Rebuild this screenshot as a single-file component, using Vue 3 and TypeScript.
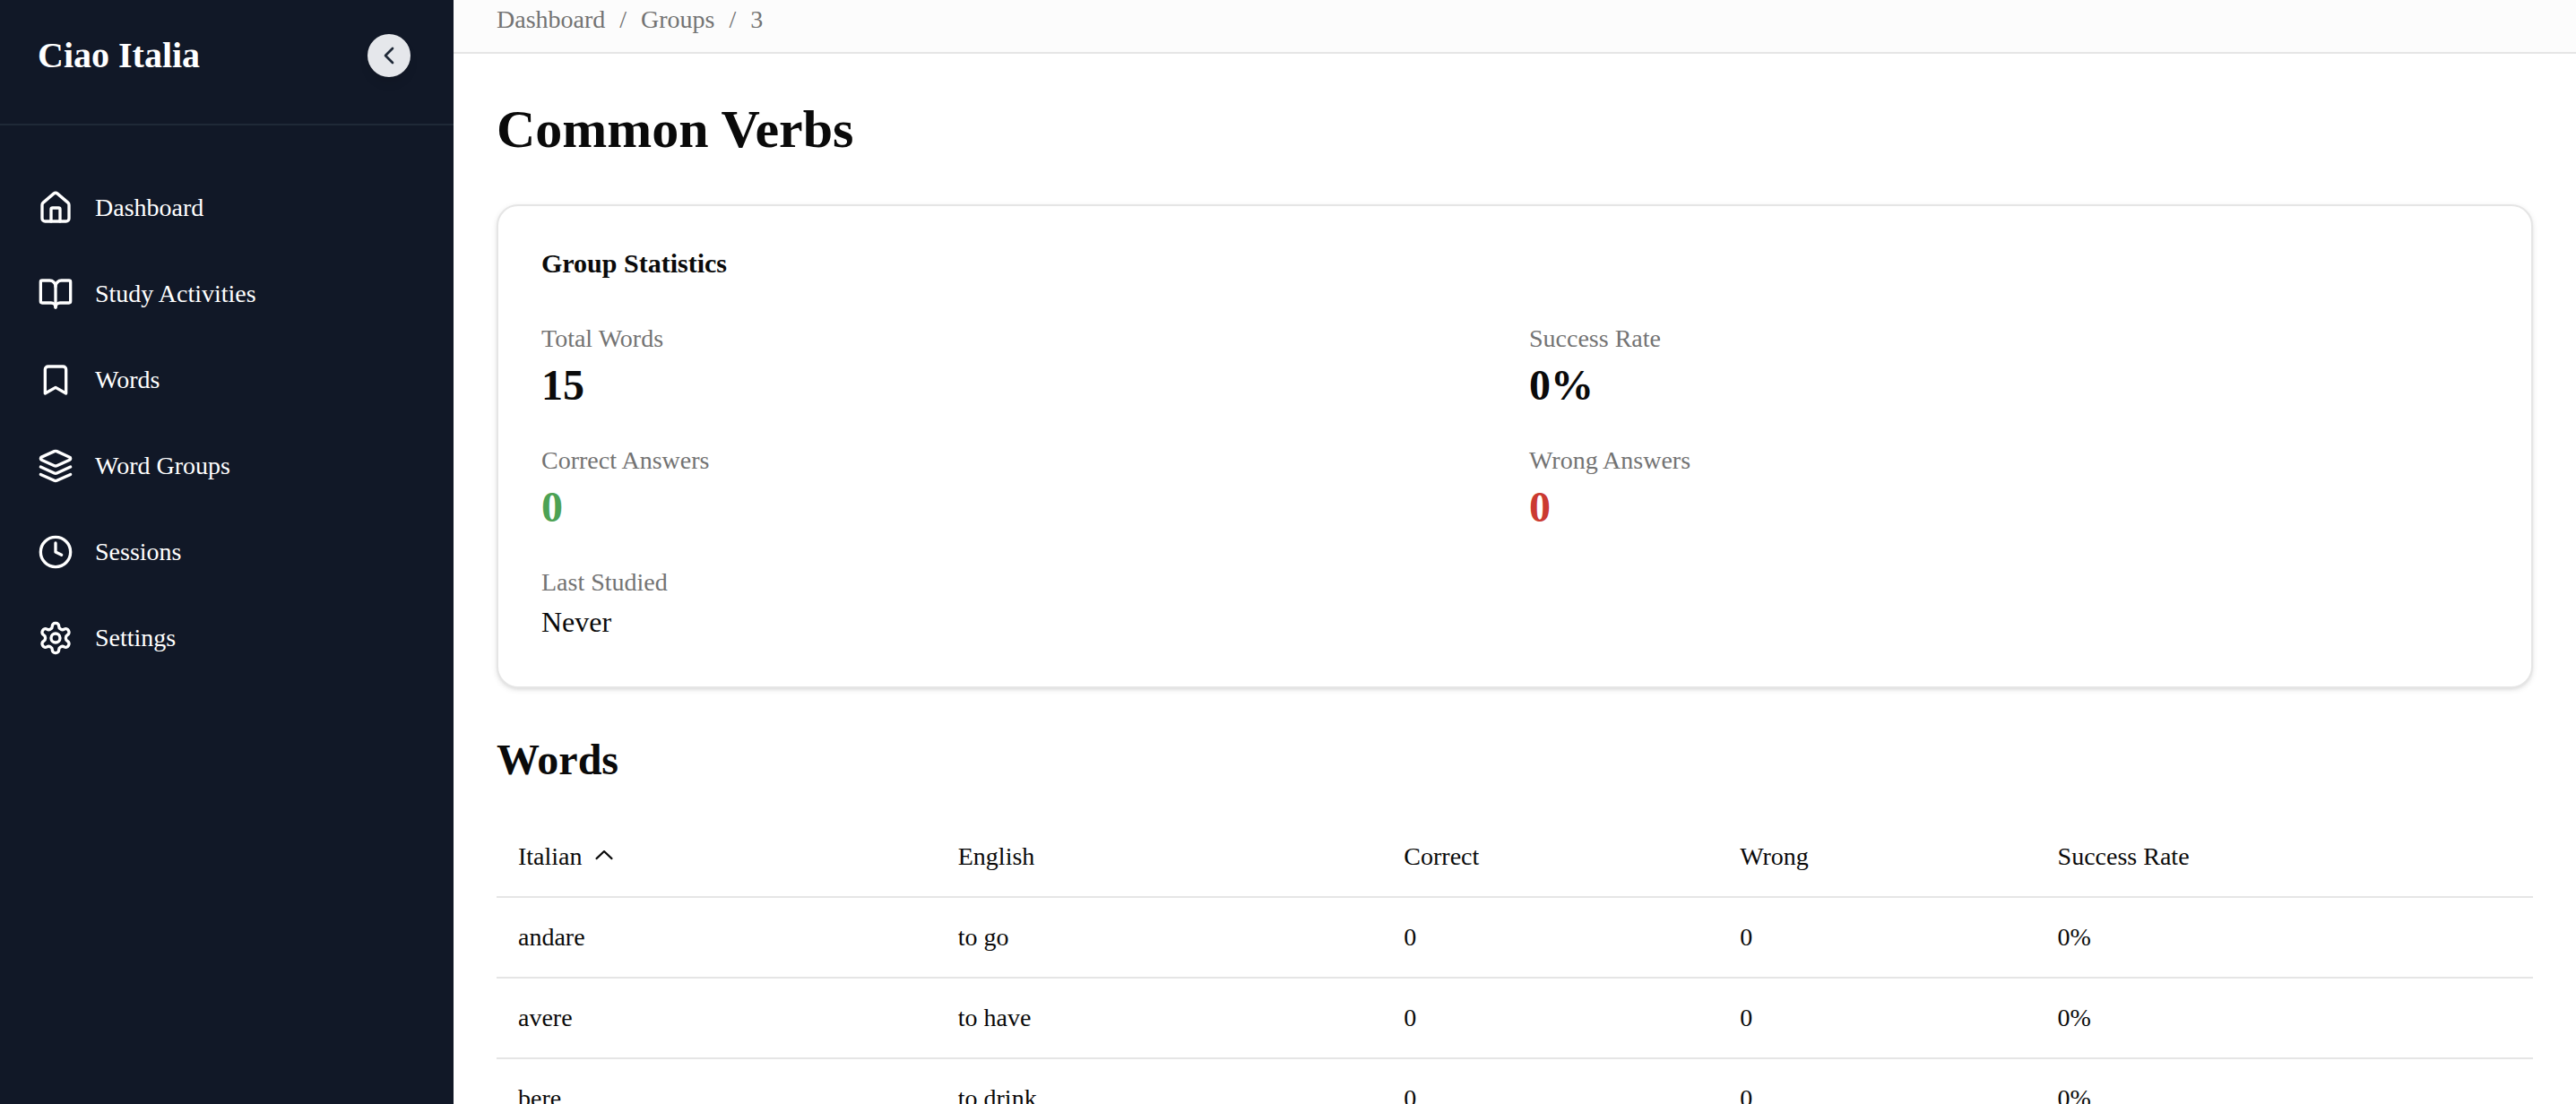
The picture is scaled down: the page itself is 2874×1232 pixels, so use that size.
<script setup lang="ts">
import { computed, ref } from 'vue'

interface NavItem {
  label: string
  href: string
  paths: string[]
}

interface Word {
  italian: string
  english: string
  correct: number
  wrong: number
}

interface Stat {
  label: string
  value: string
  tone: string
}

type SortKey = keyof Word

const navItems: NavItem[] = [
  {
    label: 'Dashboard',
    href: '#/dashboard',
    paths: [
      'M15 21v-8a1 1 0 0 0-1-1h-4a1 1 0 0 0-1 1v8',
      'M3 10a2 2 0 0 1 .709-1.528l7-5.999a2 2 0 0 1 2.582 0l7 5.999A2 2 0 0 1 21 10v9a2 2 0 0 1-2 2H5a2 2 0 0 1-2-2z',
    ],
  },
  {
    label: 'Study Activities',
    href: '#/study-activities',
    paths: [
      'M12 7v14',
      'M3 18a1 1 0 0 1-1-1V4a1 1 0 0 1 1-1h5a4 4 0 0 1 4 4 4 4 0 0 1 4-4h5a1 1 0 0 1 1 1v13a1 1 0 0 1-1 1h-6a3 3 0 0 0-3 3 3 3 0 0 0-3-3z',
    ],
  },
  {
    label: 'Words',
    href: '#/words',
    paths: ['m19 21-7-4-7 4V5a2 2 0 0 1 2-2h10a2 2 0 0 1 2 2v16z'],
  },
  {
    label: 'Word Groups',
    href: '#/groups',
    paths: [
      'm12.83 2.18a2 2 0 0 0-1.66 0L2.6 6.08a1 1 0 0 0 0 1.83l8.58 3.91a2 2 0 0 0 1.66 0l8.58-3.9a1 1 0 0 0 0-1.83Z',
      'm22 17.65-9.17 4.16a2 2 0 0 1-1.66 0L2 17.65',
      'm22 12.65-9.17 4.16a2 2 0 0 1-1.66 0L2 12.65',
    ],
  },
  {
    label: 'Sessions',
    href: '#/sessions',
    paths: ['M12 2a10 10 0 1 0 0 20a10 10 0 1 0 0-20z', 'M12 6v6l4 2'],
  },
  {
    label: 'Settings',
    href: '#/settings',
    paths: [
      'M12.22 2h-.44a2 2 0 0 0-2 2v.18a2 2 0 0 1-1 1.73l-.43.25a2 2 0 0 1-2 0l-.15-.08a2 2 0 0 0-2.73.73l-.22.38a2 2 0 0 0 .73 2.73l.15.1a2 2 0 0 1 1 1.72v.51a2 2 0 0 1-1 1.74l-.15.09a2 2 0 0 0-.73 2.73l.22.38a2 2 0 0 0 2.73.73l.15-.08a2 2 0 0 1 2 0l.43.25a2 2 0 0 1 1 1.73V20a2 2 0 0 0 2 2h.44a2 2 0 0 0 2-2v-.18a2 2 0 0 1 1-1.73l.43-.25a2 2 0 0 1 2 0l.15.08a2 2 0 0 0 2.73-.73l.22-.39a2 2 0 0 0-.73-2.73l-.15-.08a2 2 0 0 1-1-1.74v-.5a2 2 0 0 1 1-1.74l.15-.09a2 2 0 0 0 .73-2.73l-.22-.38a2 2 0 0 0-2.73-.73l-.15.08a2 2 0 0 1-2 0l-.43-.25a2 2 0 0 1-1-1.73V4a2 2 0 0 0-2-2z',
      'M12 9a3 3 0 1 0 0 6a3 3 0 1 0 0-6z',
    ],
  },
]

const stats: Stat[] = [
  { label: 'Total Words', value: '15', tone: 'figure' },
  { label: 'Success Rate', value: '0%', tone: 'figure' },
  { label: 'Correct Answers', value: '0', tone: 'figure good' },
  { label: 'Wrong Answers', value: '0', tone: 'figure bad' },
  { label: 'Last Studied', value: 'Never', tone: 'plain' },
]

const columns: { key: SortKey; label: string }[] = [
  { key: 'italian', label: 'Italian' },
  { key: 'english', label: 'English' },
  { key: 'correct', label: 'Correct' },
  { key: 'wrong', label: 'Wrong' },
]

const words: Word[] = [
  { italian: 'andare', english: 'to go', correct: 0, wrong: 0 },
  { italian: 'avere', english: 'to have', correct: 0, wrong: 0 },
  { italian: 'bere', english: 'to drink', correct: 0, wrong: 0 },
]

const sortKey = ref<SortKey>('italian')
const ascending = ref(true)

function sortBy(key: SortKey) {
  ascending.value = sortKey.value === key ? !ascending.value : true
  sortKey.value = key
}

const sortedWords = computed(() =>
  [...words].sort((a, b) => {
    const order = String(a[sortKey.value]).localeCompare(String(b[sortKey.value]))
    return ascending.value ? order : -order
  }),
)

function successRate(word: Word): string {
  const total = word.correct + word.wrong
  return `${total ? Math.round((word.correct / total) * 100) : 0}%`
}
</script>

<template>
  <div class="app">
    <aside class="sidebar">
      <div class="brand">
        <span class="brand-name">Ciao Italia</span>
        <button class="collapse" type="button" aria-label="Collapse sidebar">
          <svg class="stroke-icon" viewBox="0 0 24 24" aria-hidden="true">
            <path d="m15 18-6-6 6-6" />
          </svg>
        </button>
      </div>
      <nav class="nav">
        <a v-for="item in navItems" :key="item.label" class="nav-link" :href="item.href">
          <svg class="stroke-icon nav-icon" viewBox="0 0 24 24" aria-hidden="true">
            <path v-for="d in item.paths" :key="d" :d="d" />
          </svg>
          <span>{{ item.label }}</span>
        </a>
      </nav>
    </aside>

    <div class="content">
      <header class="topbar">
        <nav class="crumbs" aria-label="Breadcrumb">
          <a href="#/dashboard">Dashboard</a>
          <span>/</span>
          <a href="#/groups">Groups</a>
          <span>/</span>
          <a href="#/groups/3">3</a>
        </nav>
      </header>

      <main class="page">
        <h1>Common Verbs</h1>

        <section class="card">
          <h3>Group Statistics</h3>
          <dl class="stats">
            <div v-for="stat in stats" :key="stat.label">
              <dt>{{ stat.label }}</dt>
              <dd :class="stat.tone">{{ stat.value }}</dd>
            </div>
          </dl>
        </section>

        <h2>Words</h2>

        <table class="words">
          <colgroup>
            <col class="col-italian" />
            <col class="col-english" />
            <col class="col-correct" />
            <col class="col-wrong" />
            <col />
          </colgroup>
          <thead>
            <tr>
              <th v-for="column in columns" :key="column.key" scope="col">
                <button class="sort" type="button" @click="sortBy(column.key)">
                  {{ column.label }}
                  <svg
                    v-if="sortKey === column.key"
                    class="sort-icon"
                    :class="{ descending: !ascending }"
                    viewBox="0 0 15 15"
                    aria-hidden="true"
                  >
                    <path
                      d="M3.135 8.842C3.324 9.043 3.641 9.054 3.842 8.865L7.5 5.435L11.158 8.865C11.36 9.054 11.676 9.043 11.865 8.842C12.054 8.641 12.043 8.324 11.842 8.135L7.842 4.385C7.65 4.205 7.35 4.205 7.158 4.385L3.158 8.135C2.957 8.324 2.946 8.641 3.135 8.842Z"
                    />
                  </svg>
                </button>
              </th>
              <th scope="col">Success Rate</th>
            </tr>
          </thead>
          <tbody>
            <tr v-for="word in sortedWords" :key="word.italian">
              <td>{{ word.italian }}</td>
              <td>{{ word.english }}</td>
              <td>{{ word.correct }}</td>
              <td>{{ word.wrong }}</td>
              <td>{{ successRate(word) }}</td>
            </tr>
          </tbody>
        </table>
      </main>
    </div>
  </div>
</template>

<style>
body {
  margin: 0;
  background: #ffffff;
}
</style>

<style scoped>
.app {
  display: flex;
  height: 100vh;
  overflow: hidden;
  font-family: "Liberation Serif", "Times New Roman", serif;
  font-size: 28px;
  line-height: 40px;
  color: #0a0a0a;
}

.app *,
.app {
  box-sizing: border-box;
}

a {
  color: inherit;
  text-decoration: none;
}

button {
  padding: 0;
  border: 0;
  background: none;
  font: inherit;
  color: inherit;
  cursor: pointer;
}

h1,
h2,
h3,
dl,
dd {
  margin: 0;
}

.stroke-icon {
  width: 32px;
  height: 32px;
  fill: none;
  stroke: currentColor;
  stroke-width: 2;
  stroke-linecap: round;
  stroke-linejoin: round;
}

.sidebar {
  flex: none;
  width: 506px;
  background: #111827;
  color: #ffffff;
}

.brand {
  display: flex;
  align-items: center;
  justify-content: space-between;
  padding: 38px 48px 52px 42px;
  border-bottom: 2px solid #1f2937;
}

.brand-name {
  font-size: 40px;
  line-height: 48px;
  font-weight: 700;
}

.collapse {
  display: flex;
  align-items: center;
  justify-content: center;
  width: 48px;
  height: 48px;
  border-radius: 50%;
  background: #e5e7eb;
  color: #1f2937;
  box-shadow: 0 8px 12px -2px rgb(0 0 0 / 10%);
}

.nav {
  display: flex;
  flex-direction: column;
  gap: 16px;
  padding-top: 52px;
}

.nav-link {
  display: flex;
  align-items: center;
  gap: 24px;
  padding: 20px 42px;
}

.nav-icon {
  width: 40px;
  height: 40px;
}

.content {
  flex: 1;
  min-width: 0;
  overflow-y: auto;
  scrollbar-width: none;
}

.topbar {
  padding: 2px 48px 16px;
  border-bottom: 2px solid #e5e5e5;
  background: #fcfcfc;
}

.crumbs {
  display: flex;
  gap: 16px;
  color: #737373;
}

.page {
  padding: 48px;
}

h1 {
  margin-bottom: 48px;
  font-size: 60px;
  line-height: 72px;
}

h2 {
  margin: 48px 0 32px;
  font-size: 48px;
  line-height: 64px;
}

h3 {
  margin-bottom: 48px;
  font-size: 30px;
  line-height: 32px;
}

.card {
  padding: 48px;
  border: 2px solid #e5e5e5;
  border-radius: 24px;
  background: #ffffff;
  box-shadow: 0 2px 6px rgb(0 0 0 / 10%), 0 2px 4px -2px rgb(0 0 0 / 10%);
}

.stats {
  display: grid;
  grid-template-columns: 1fr 1fr;
  gap: 32px;
}

dt {
  color: #737373;
}

.figure {
  font-size: 48px;
  line-height: 64px;
  font-weight: 700;
}

.plain {
  font-size: 32px;
  line-height: 48px;
}

.good {
  color: #4da254;
}

.bad {
  color: #cb3a31;
}

.words {
  width: 100%;
  border-spacing: 0;
  table-layout: fixed;
}

.col-italian {
  width: 21.6%;
}

.col-english {
  width: 21.9%;
}

.col-correct {
  width: 16.5%;
}

.col-wrong {
  width: 15.6%;
}

th,
td {
  padding: 24px;
  border-bottom: 2px solid #e5e5e5;
  text-align: left;
  font-weight: 400;
}

.sort {
  display: flex;
  align-items: center;
  gap: 8px;
}

.sort-icon {
  width: 32px;
  height: 32px;
  fill: currentColor;
}

.descending {
  transform: rotate(180deg);
}
</style>
